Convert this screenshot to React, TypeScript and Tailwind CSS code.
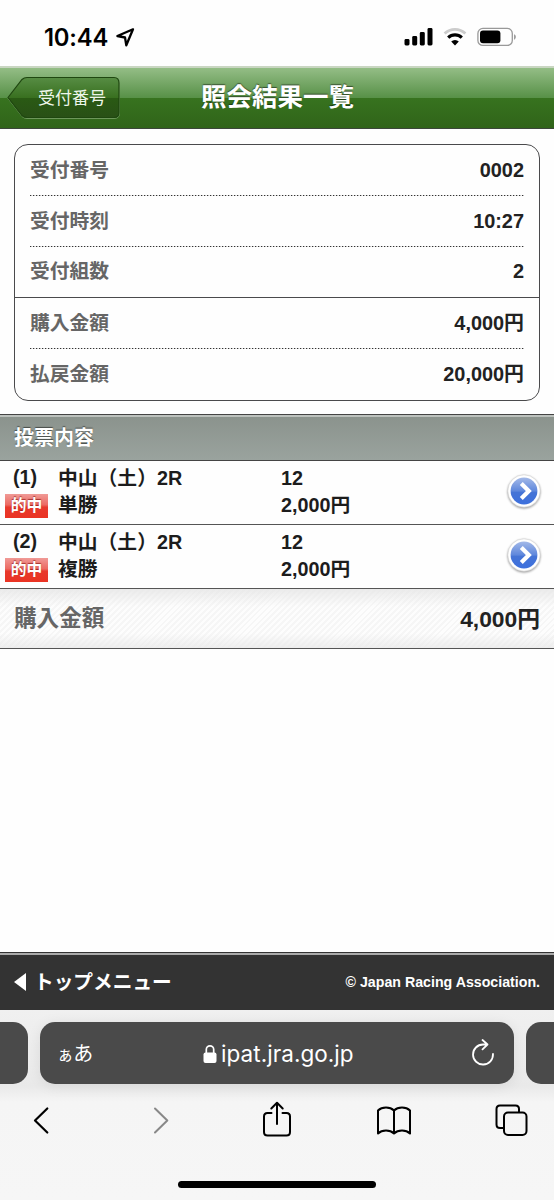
import React from 'react';

// One line of the receipt summary
const Receipt: React.FC<{ label: string; value: string; line?: string }> = ({ label, value, line = '' }) => (
  <div className={`h-[51px] px-[15px] ${line}`}>
    <div className="h-full flex items-center justify-between">
      <span className="text-[19.8px] text-[#666]">{label}</span>
      <span className="text-[19.9px] text-[#222]">{value}</span>
    </div>
  </div>
);

const Dots: React.FC = () => (
  <div className="h-px mx-[15px] -mt-px bg-[repeating-linear-gradient(90deg,#333_0_1px,#bbb_1px_2px,#eee_2px_3px)]" />
);

const bets = [
  { no: '(1)', race: '中山（土）2R', type: '単勝', horse: '12', amount: '2,000円' },
  { no: '(2)', race: '中山（土）2R', type: '複勝', horse: '12', amount: '2,000円' },
];

const ArrowBadge: React.FC = () => (
  <svg width="40" height="40" viewBox="0 0 40 40" className="mb-[3px] drop-shadow-[0_1px_1px_rgba(0,0,0,0.4)]">
    <defs>
      <linearGradient id="badge" x1="0" y1="0" x2="0" y2="1">
        <stop offset="0" stopColor="#a3b9e8" />
        <stop offset="0.5" stopColor="#5e87dc" />
        <stop offset="0.55" stopColor="#4574d6" />
        <stop offset="1" stopColor="#3d70dd" />
      </linearGradient>
    </defs>
    <circle cx="20" cy="20" r="16.2" fill="#fff" stroke="#ccc" strokeWidth="0.6" />
    <circle cx="20" cy="20" r="13.4" fill="url(#badge)" />
    <path d="M17.3 12.6 24.8 20l-7.5 7.4" fill="none" stroke="#fff" strokeWidth="4.2" />
  </svg>
);

const StatusBar: React.FC = () => (
  <div className="h-[66px] pt-[8px] pl-[44px] pr-[37px] flex items-center justify-between">
    <div className="flex items-center">
      <span className="w-[66px] pt-px whitespace-nowrap font-['Inter',sans-serif] text-[23.8px] font-semibold tracking-[-0.2px] text-black">10:44</span>
      <svg width="24" height="24" viewBox="0 0 24 24" className="ml-[4px]" fill="none" stroke="#000" strokeWidth="2.3" strokeLinejoin="round">
        <path d="M19 4.300 3.400 11 11 12.500 12.300 20.300z" />
      </svg>
    </div>
    <div className="flex items-center">
      <svg width="30" height="20" viewBox="0 0 30 20" fill="#000">
        <rect x="0.5" y="12" width="5" height="6.5" rx="1.4" />
        <rect x="8.2" y="9" width="5" height="9.5" rx="1.4" />
        <rect x="15.8" y="5" width="5" height="13.5" rx="1.4" />
        <rect x="23.5" y="1" width="5" height="17.5" rx="1.4" />
      </svg>
      <svg width="24" height="20" viewBox="0 0 24 20" className="ml-[9px]" fill="none">
        <path d="M1.6 6.6a15 15 0 0 1 20.8 0" stroke="#ccc" strokeWidth="2.8" />
        <path d="M5.2 10.6a9.8 9.8 0 0 1 13.6 0" stroke="#000" strokeWidth="3.2" />
        <path d="M12 18.4 8.2 14.6a5.4 5.4 0 0 1 7.6 0z" fill="#000" />
      </svg>
      <svg width="40" height="20" viewBox="0 0 40 20" className="ml-[10px]" fill="none">
        <rect x="0.9" y="1.4" width="34.4" height="17" rx="5" stroke="#999" strokeWidth="1.3" />
        <rect x="3" y="3.6" width="20.4" height="12.6" rx="3" fill="#000" />
        <path d="M37.2 7.3c2 .7 2 4.7 0 5.4z" fill="#888" />
      </svg>
    </div>
  </div>
);

const Header: React.FC = () => (
  <header className="h-[63px] relative flex items-center border-t-2 border-[#c9d6c2] border-b border-b-[#3c463a] bg-[linear-gradient(#94bd86_0,#579047_50%,#37731f_50%,#306419_100%)]">
    <svg width="114" height="44" viewBox="0 0 114 44" className="absolute left-[7px] top-[8px]">
      <defs>
        <linearGradient id="back" x1="0" y1="0" x2="0" y2="1">
          <stop offset="0" stopColor="#578d44" />
          <stop offset="0.5" stopColor="#397020" />
          <stop offset="0.52" stopColor="#2a5a14" />
          <stop offset="1" stopColor="#295016" />
        </linearGradient>
      </defs>
      <path d="M1 22.5 15 4.5Q17 2.5 20 2.5H107Q112.5 2.5 112.5 8V37.5Q112.5 42.5 107 42.5H20Q17 42.5 15 40.5Z" fill="none" stroke="#86ab75" strokeOpacity=".7" />
      <path d="M1 21.5 15 3.5Q17 1.5 20 1.5H107Q112 1.5 112 7V36.5Q112 41.5 107 41.5H20Q17 41.5 15 39.5Z" fill="url(#back)" stroke="#1f4710" strokeWidth="1.2" />
    </svg>
    <span className="relative ml-[38px] mt-px w-[68px] whitespace-nowrap text-[17px] font-normal text-[#eef6ea]">受付番号</span>
    <h1 className="relative w-[154px] ml-[95px] whitespace-nowrap text-[25.5px] font-bold text-white [text-shadow:0_-1px_1px_rgba(0,0,0,0.5)]">照会結果一覧</h1>
  </header>
);

const Browser: React.FC = () => (
  <div className="h-[190px] shrink-0 overflow-hidden bg-[linear-gradient(#f0f0f0_0,#ececec_55px,#e9e9e9_76px,#f5f5f5_92px,#f6f6f6_100%)]">
    <div className="pt-[12px] flex gap-[12px] justify-between">
      <div className="w-[28px] h-[62px] rounded-r-[15px] bg-[#4a4a4a]" />
      <div className="flex-1 h-[62px] rounded-[15px] bg-[#4a4a4a] shadow-[0_2px_14px_rgba(0,0,0,0.08)] flex items-center pl-[17px] pr-[17px] text-white">
        <span className="w-[146px] pt-[2px] font-normal leading-none tracking-[-0.3px]">
          <span className="text-[16.5px]">ぁ</span>
          <span className="text-[20px]">あ</span>
        </span>
        <svg width="14" height="20" viewBox="0 0 14 20" className="mt-[2px]" fill="none">
          <path d="M3.3 9V5.5a3.7 3.7 0 0 1 7.4 0V9" stroke="#fff" strokeWidth="1.7" />
          <rect x="0.5" y="8.5" width="13" height="10.5" rx="2" fill="#fff" />
        </svg>
        <span className="flex-1 ml-[4px] pt-[2px] font-['Inter',sans-serif] font-normal text-[22.5px] tracking-[0.05px]">ipat.jra.go.jp</span>
        <svg width="28" height="30" viewBox="0 0 28 30" fill="none" stroke="#fff" strokeWidth="1.8" strokeLinecap="round" strokeLinejoin="round">
          <path d="M24 16A10 10 0 1 1 14 6.500h4.500M13.500 2l5 4.500-5 4.800" />
        </svg>
      </div>
      <div className="w-[28px] h-[62px] rounded-l-[15px] bg-[#4a4a4a]" />
    </div>
    <div className="h-[72px] px-[24px] flex items-center justify-between">
      <svg width="34" height="36" viewBox="0 0 34 36" fill="none" stroke="#000" strokeWidth="2.2" strokeLinecap="round" strokeLinejoin="round">
        <path d="M23.3 6.500 11 18.500l12.300 12" />
      </svg>
      <svg width="34" height="36" viewBox="0 0 34 36" className="ml-[3px]" fill="none" stroke="#888" strokeWidth="2" strokeLinecap="round" strokeLinejoin="round">
        <path d="M12 6.500 24.300 18.500 12 30.500" />
      </svg>
      <svg width="34" height="40" viewBox="0 0 34 40" className="mb-[2px]" fill="none" stroke="#000" strokeWidth="2" strokeLinecap="round" strokeLinejoin="round">
        <path d="M12.500 14H8.500Q5 14 5 17.500V33Q5 36.500 8.500 36.500H27.500Q31 36.500 31 33V17.500Q31 14 27.500 14H23.500M18 25V4M12.300 9.500 18 3.800 23.700 9.500" />
      </svg>
      <svg width="38" height="36" viewBox="0 0 38 36" fill="none" stroke="#000" strokeWidth="2" strokeLinejoin="round">
        <path d="M20 8.500C16 4.500 8 4.500 4 8.500V31.500C8 27.500 16 27.500 20 31.500C24 27.500 32 27.500 36 31.500V8.500C32 4.500 24 4.500 20 8.500ZM20 8.500V31" />
      </svg>
      <svg width="36" height="36" viewBox="0 0 36 36" fill="none" stroke="#000" strokeWidth="2" strokeLinejoin="round">
        <rect x="10" y="10.500" width="22.500" height="22.500" rx="4" />
        <path d="M10 26H6Q2.500 26 2.500 22.500V7Q2.500 3.500 6 3.500H21.500Q25 3.500 25 7V10.500" />
      </svg>
    </div>
    <div className="mt-[25px] mx-auto w-[198px] h-[7px] rounded-full bg-black" />
  </div>
);

const App: React.FC = () => {
  return (
    <div className="w-[554px] h-[1200px] overflow-hidden flex flex-col bg-[#fefefe] font-bold leading-none font-['Liberation_Sans','Noto_Sans_CJK_JP',sans-serif]">
      <StatusBar />
      <Header />

      {/* Receipt summary */}
      <section className="mt-[15px] mx-[14px] h-[257px] shrink-0 rounded-[14px] border-[1.5px] border-[#4a4a4c]">
        <Receipt label="受付番号" value="0002" />
        <Dots />
        <Receipt label="受付時刻" value="10:27" />
        <Dots />
        <Receipt label="受付組数" value="2" line="border-b border-[#4a4a4c]" />
        <Receipt label="購入金額" value="4,000円" />
        <Dots />
        <Receipt label="払戻金額" value="20,000円" />
      </section>

      {/* Bets */}
      <h2 className="mt-[13px] h-[47px] shrink-0 pl-[14px] flex items-center border-t border-b border-[#444] bg-[linear-gradient(#bcc1bd_0_2px,#8b938d_2px,#9aa39e_100%)] text-[20px] text-white [text-shadow:0_-1px_1px_rgba(0,0,0,0.5)]">
        投票内容
      </h2>
      {bets.map((bet) => (
        <div key={bet.no} className="h-[64px] shrink-0 pr-[10px] flex items-center border-b border-[#555] text-[19.8px] text-[#1c1c1c]">
          <div className="w-[58px] flex flex-col gap-[3px]">
            <span className="h-[24px] pl-[13px] pt-px">{bet.no}</span>
            <span className="ml-[5px] w-[43px] h-[24px] flex items-center justify-center text-[15.8px] text-white bg-[linear-gradient(#f09a96_0,#ec6a62_45%,#e8392c_55%,#ea3323_100%)] [text-shadow:0_-1px_1px_rgba(120,0,0,0.6)]">
              的中
            </span>
          </div>
          <div className="w-[223px] flex flex-col gap-[3px]">
            <span className="h-[24px] flex items-center">{bet.race}</span>
            <span className="h-[24px] flex items-center">{bet.type}</span>
          </div>
          <div className="flex-1 flex flex-col gap-[3px]">
            <span className="h-[24px] flex items-center">{bet.horse}</span>
            <span className="h-[24px] flex items-center">{bet.amount}</span>
          </div>
          <ArrowBadge />
        </div>
      ))}
      <div className="h-[60px] shrink-0 border-b border-[#555] bg-[linear-gradient(#e6e6e6cc_0,#ffffff00_30%,#ffffff00_75%,#eaeaeacc_100%),repeating-linear-gradient(135deg,#f6f6f6_0_2px,#fdfdfd_2px_4.2px)]">
        <div className="h-full px-[14px] pt-[2px] flex items-center justify-between">
          <span className="text-[22.6px] text-[#666]">購入金額</span>
          <span className="text-[22.8px] text-[#222]">4,000円</span>
        </div>
      </div>

      <div className="flex-1" />

      <footer className="h-[58px] shrink-0 px-[14px] pt-[2px] flex items-center justify-between bg-[linear-gradient(#333_0_1px,#aaa_1px_3px,#333_3px)] text-white">
        <div className="flex items-center">
          <svg width="12" height="20" viewBox="0 0 12 20" fill="#fff">
            <path d="M0 10 12 1v18z" />
          </svg>
          <span className="ml-[8px] pt-px text-[19.7px]">トップメニュー</span>
        </div>
        <span className="text-[14.2px]">© Japan Racing Association.</span>
      </footer>
      <Browser />
    </div>
  );
};

export default App;
